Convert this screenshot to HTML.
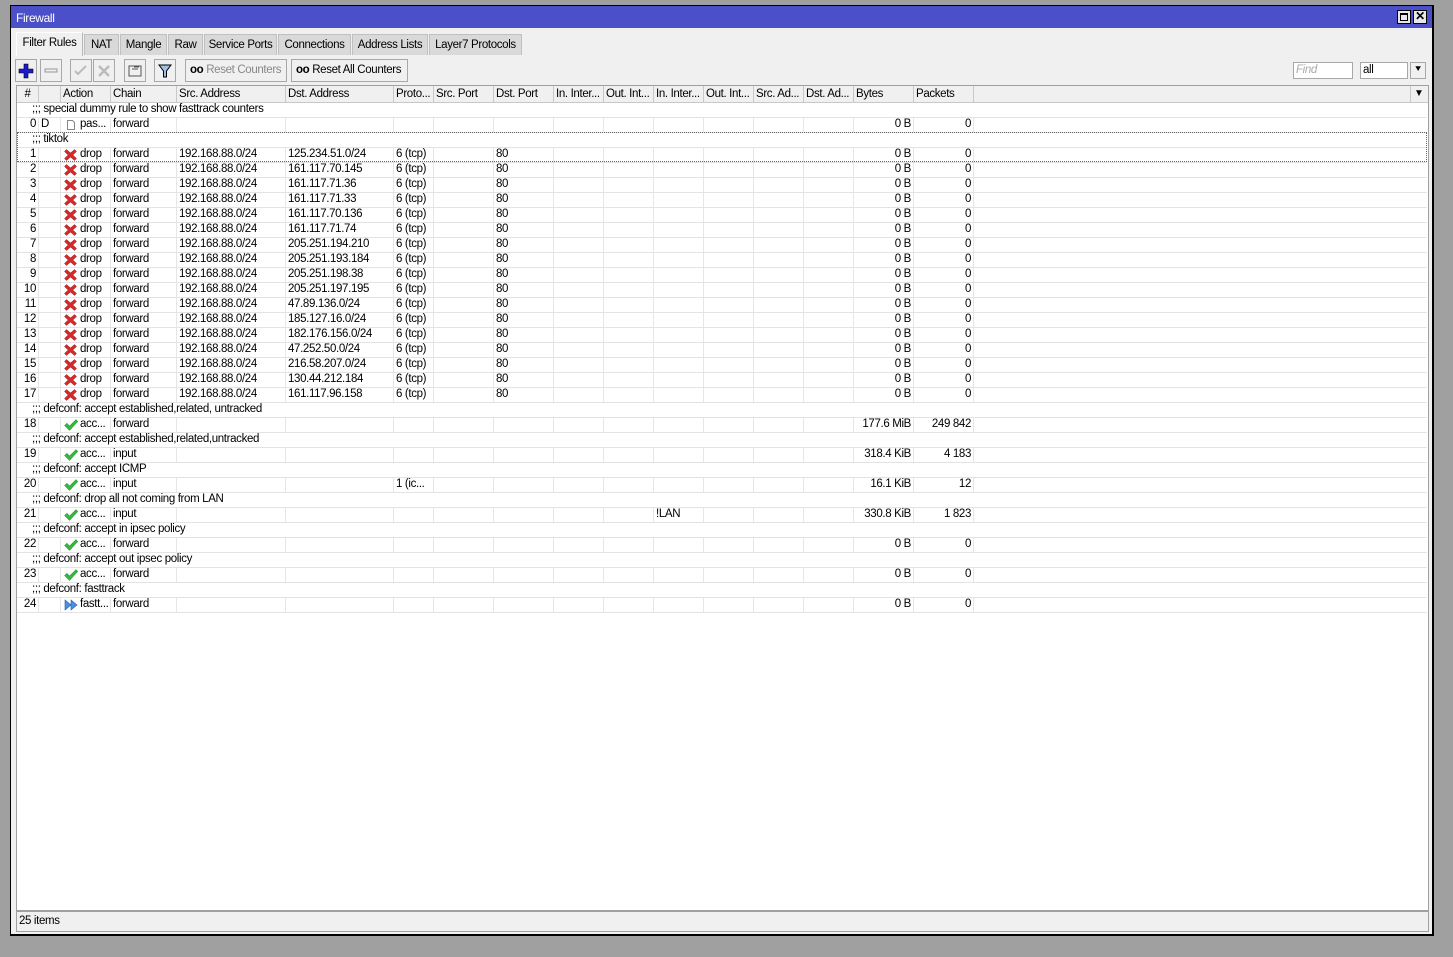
<!DOCTYPE html>
<html><head><meta charset="utf-8">
<style>
*{box-sizing:border-box;margin:0;padding:0}
body{width:1453px;height:957px;background:#a0a0a0;font-family:"Liberation Sans",Arial,sans-serif;font-size:11.5px;color:#000;position:relative;overflow:hidden;letter-spacing:-0.35px}
.win{position:absolute;left:10px;top:5px;width:1424px;height:931px;background:#f0f0f0;border:1px solid #000;border-right:2px solid #000;border-bottom:2px solid #000}
.title{position:absolute;left:0;top:0;width:1421px;height:22px;background:#4b50c8;color:#fff;padding:5px 0 0 5px;font-size:12px}
.tb{position:absolute;top:4px;width:14px;height:14px;background:#e8e8e8;border:1px solid #000}
.tabs{position:absolute;top:26px;left:5px;height:23px}
.tab{position:absolute;top:2px;height:21px;background:#d9d9d9;border:1px solid #c0c0c0;border-bottom:none;padding:4px 0 0 0;text-align:center;white-space:nowrap}
.tab.act{top:0;height:24px;background:#f0f0f0;border-color:#fff #b8b8b8 #f0f0f0 #fff;padding-top:4px}
.btn{position:absolute;top:53px;height:23px;border:1px solid #a8a8a8;background:#f0f0f0;white-space:nowrap}
.tbl{position:absolute;left:5px;top:79px;width:1413px;height:826px;background:#fff;border:1px solid #a0a0a0}
.hdr{position:absolute;left:0;top:0;height:17px;width:1411px;background:#f0f0f0;border-bottom:1px solid #c8c8c8}
.hdr span{position:absolute;top:0;height:16px;border-right:1px solid #c8c8c8;padding:2px 0 0 2px;white-space:nowrap;overflow:hidden}
.r{position:absolute;left:0;width:1410px;height:15px;border-bottom:1px solid #e3e3e3}
.r span{position:absolute;top:0;height:14px;border-right:1px solid #e6e6e6;padding:0 0 0 2px;white-space:nowrap;overflow:hidden;line-height:13px}
.r span.rt{text-align:right;padding:0 2px 0 0}
.c{position:absolute;left:0;width:1410px;height:15px;border-bottom:1px solid #e3e3e3;padding-left:15px;line-height:13px}
.status{position:absolute;left:5px;top:905px;width:1413px;height:21px;border:1px solid #a0a0a0;padding:3px 0 0 2px}
svg.i{position:absolute;top:1px;left:3px}
</style></head><body>
<svg width="0" height="0" style="position:absolute">
<defs>
<symbol id="x" viewBox="0 0 13 12"><path d="M0.5 2.5L2.5 0.5L6.5 4L10.5 0.5L12.5 2.5L8.8 6L12.5 9.5L10.5 11.5L6.5 8L2.5 11.5L0.5 9.5L4.2 6Z" fill="#d52a2a" stroke="#9a1515" stroke-width="0.5"/></symbol>
<symbol id="ok" viewBox="0 0 14 12"><path d="M0.5 6.5L3 4.2L5.5 7L12 0.5L13.8 2.5L5.5 11.5Z" fill="#36b840" stroke="#1d8a28" stroke-width="0.5"/></symbol>
<symbol id="ff" viewBox="0 0 14 12"><path d="M1 1L7 6L1 11Z M7 1L13 6L7 11Z" fill="#4a8fe0" stroke="#2060b0" stroke-width="0.6"/></symbol>
</defs></svg>
<div class="win">
<div class="title">Firewall</div>
<div class="tb" style="left:1386px"><div style="position:absolute;left:2px;top:2px;width:8px;height:8px;border:1px solid #000;border-top-width:2px"></div></div>
<div class="tb" style="left:1402px;font-weight:bold;font-size:12px;line-height:11px;text-align:center">✕</div>
<div class="tabs">
<div class="tab act" style="left:0;width:67px">Filter Rules</div>
<div class="tab" style="left:68px;width:35px">NAT</div>
<div class="tab" style="left:104px;width:47px">Mangle</div>
<div class="tab" style="left:152px;width:35px">Raw</div>
<div class="tab" style="left:188px;width:73px">Service Ports</div>
<div class="tab" style="left:262px;width:73px">Connections</div>
<div class="tab" style="left:336px;width:76px">Address Lists</div>
<div class="tab" style="left:413px;width:93px">Layer7 Protocols</div>
</div>
<div class="btn" style="left:4px;width:22px"><svg width="20" height="21"><path d="M8 4h4v5h5v4h-5v5h-4v-5h-5v-4h5z" fill="#1a1ad0" stroke="#000" stroke-width="0.6"/></svg></div>
<div class="btn" style="left:29px;width:22px"><svg width="20" height="21"><rect x="4" y="9" width="12" height="3" fill="none" stroke="#999"/></svg></div>
<div class="btn" style="left:59px;width:22px"><svg width="20" height="21"><path d="M4 11l3 3l8-8" fill="none" stroke="#bbb" stroke-width="2"/></svg></div>
<div class="btn" style="left:82px;width:22px"><svg width="20" height="21"><path d="M5 6l10 10M15 6l-10 10" stroke="#bbb" stroke-width="2.5"/></svg></div>
<div class="btn" style="left:113px;width:22px"><svg width="20" height="21"><rect x="4" y="6" width="12" height="10" fill="none" stroke="#555"/><path d="M7 9h6M9 7h5" stroke="#555"/></svg></div>
<div class="btn" style="left:143px;width:22px"><svg width="20" height="21"><path d="M4 5h12l-4.5 6v6h-3v-6z" fill="#9ec0e8" stroke="#000"/></svg></div>
<div class="btn" style="left:174px;width:102px;padding:4px 0 0 4px;color:#888"><b style="color:#000">oo</b> Reset Counters</div>
<div class="btn" style="left:280px;width:117px;padding:4px 0 0 4px"><b>oo</b> Reset All Counters</div>
<div style="position:absolute;left:1282px;top:56px;width:60px;height:17px;background:#fff;border:1px solid #a8a8a8;color:#aaa;font-style:italic;padding:1px 0 0 2px">Find</div>
<div style="position:absolute;left:1349px;top:56px;width:48px;height:17px;background:#fff;border:1px solid #a8a8a8;padding:1px 0 0 2px">all</div>
<div style="position:absolute;left:1399px;top:56px;width:16px;height:17px;border:1px solid #a8a8a8;text-align:center;font-size:10px;line-height:14px">⯆</div>
<div class="tbl">
<div class="hdr">
<span style="left:0;width:22px;text-align:center;padding-left:0">#</span>
<span style="left:22px;width:22px"></span>
<span style="left:44px;width:50px">Action</span>
<span style="left:94px;width:66px">Chain</span>
<span style="left:160px;width:109px">Src. Address</span>
<span style="left:269px;width:108px">Dst. Address</span>
<span style="left:377px;width:40px">Proto...</span>
<span style="left:417px;width:60px">Src. Port</span>
<span style="left:477px;width:60px">Dst. Port</span>
<span style="left:537px;width:50px">In. Inter...</span>
<span style="left:587px;width:50px">Out. Int...</span>
<span style="left:637px;width:50px">In. Inter...</span>
<span style="left:687px;width:50px">Out. Int...</span>
<span style="left:737px;width:50px">Src. Ad...</span>
<span style="left:787px;width:50px">Dst. Ad...</span>
<span style="left:837px;width:60px">Bytes</span>
<span style="left:897px;width:60px">Packets</span>
<span style="left:1393px;width:18px;border:none;border-left:1px solid #c8c8c8;font-size:10px;padding:2px 0 0 3px">▼</span>
</div>
<div id="rows"></div>
<div style="position:absolute;left:0;top:46px;width:1410px;height:30px;border:1px dotted #666;pointer-events:none"></div>
</div>
<div class="status">25 items</div>
</div>
<script>
var W=[22,22,50,66,109,108,40,60,60,50,50,50,50,50,50,60,60];
var L=[];var s=0;for(var i=0;i<W.length;i++){L.push(s);s+=W[i];}
var drops=["125.234.51.0/24","161.117.70.145","161.117.71.36","161.117.71.33","161.117.70.136","161.117.71.74","205.251.194.210","205.251.193.184","205.251.198.38","205.251.197.195","47.89.136.0/24","185.127.16.0/24","182.176.156.0/24","47.252.50.0/24","216.58.207.0/24","130.44.212.184","161.117.96.158"];
var rows=[];
rows.push(["c",";;; special dummy rule to show fasttrack counters"]);
rows.push(["r","0","D","doc","pas...","forward","","","","","","","","","","","","0 B","0"]);
rows.push(["c",";;; tiktok"]);
drops.forEach(function(d,k){rows.push(["r",String(k+1),"","x","drop","forward","192.168.88.0/24",d,"6 (tcp)","","80","","","","","","","0 B","0"]);});
function acc(c,n,ch,b,p,proto,ii){rows.push(["c",c]);rows.push(["r",n,"","ok","acc...",ch,"","",proto||"","","","","",ii||"","","","",b,p]);}
acc(";;; defconf: accept established,related, untracked","18","forward","177.6 MiB","249 842");
acc(";;; defconf: accept established,related,untracked","19","input","318.4 KiB","4 183");
acc(";;; defconf: accept ICMP","20","input","16.1 KiB","12","1 (ic...");
acc(";;; defconf: drop all not coming from LAN","21","input","330.8 KiB","1 823","","!LAN");
acc(";;; defconf: accept in ipsec policy","22","forward","0 B","0");
acc(";;; defconf: accept out ipsec policy","23","forward","0 B","0");
rows.push(["c",";;; defconf: fasttrack"]);
rows.push(["r","24","","ff","fastt...","forward","","","","","","","","","","","","0 B","0"]);
var h="";var y=17;
rows.forEach(function(r){
 if(r[0]=="c"){h+='<div class="c" style="top:'+y+'px">'+r[1]+'</div>';}
 else{
  h+='<div class="r" style="top:'+y+'px">';
  var cells=[r[1],r[2],r[4],r[5],r[6],r[7],r[8],r[9],r[10],r[11],r[12],r[13],r[14],r[15],r[16],r[17],r[18]];
  for(var i=0;i<17;i++){
   var cls=(i==0||i>=15)?' class="rt"':'';
   var inner=cells[i];
   if(i==2){
     var ic=r[3];var svg='';
     if(ic=="x")svg='<svg class="i" width="13" height="12"><use href="#x"/></svg>';
     else if(ic=="ok")svg='<svg class="i" width="14" height="12"><use href="#ok"/></svg>';
     else if(ic=="ff")svg='<svg class="i" width="14" height="12"><use href="#ff"/></svg>';
     else svg='<svg class="i" width="10" height="12" style="left:5px"><path d="M1.5 1.5h5l2 2v7h-7z" fill="#fff" stroke="#888"/></svg>';
     inner=svg+'<span style="position:static;border:none;padding:0 0 0 17px">'+inner+'</span>';
   }
   h+='<span'+cls+' style="left:'+L[i]+'px;width:'+W[i]+'px">'+inner+'</span>';
  }
  h+='</div>';
 }
 y+=15;
});
document.getElementById("rows").innerHTML=h;
</script>
</body></html>
